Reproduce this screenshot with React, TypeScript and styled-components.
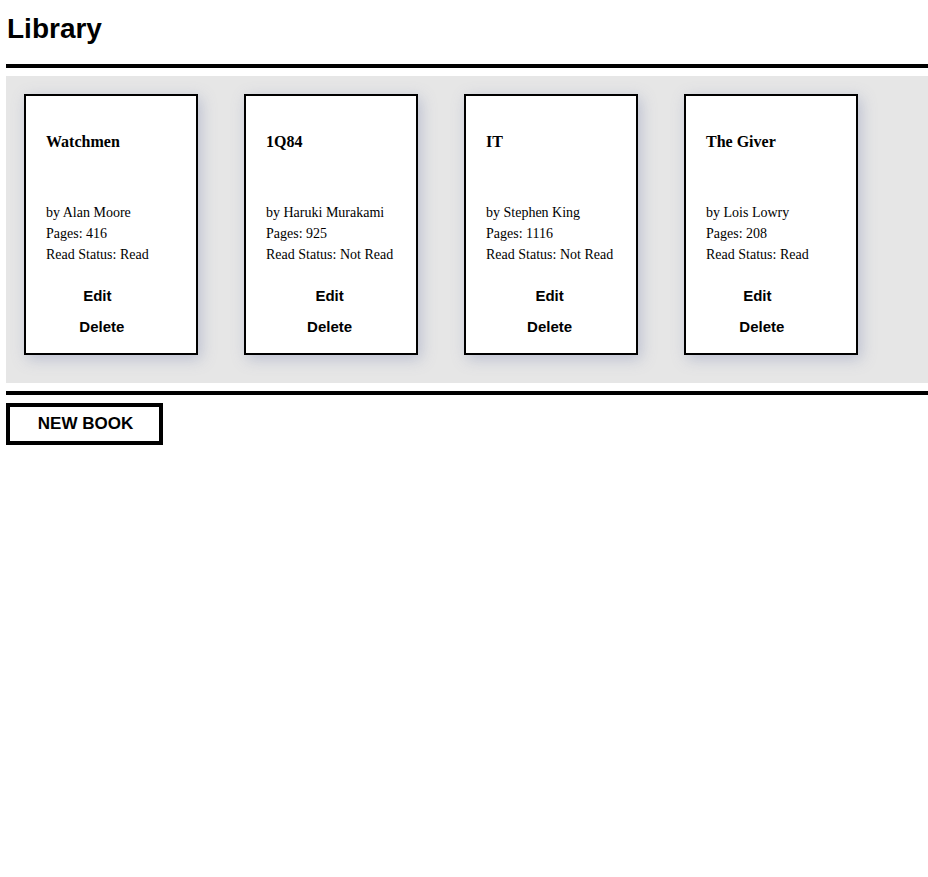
import React from "react";
import styled, { createGlobalStyle } from "styled-components";

type Book = {
  title: string;
  author: string;
  pages: number;
  read: boolean;
};

const books: Book[] = [
  { title: "Watchmen", author: "Alan Moore", pages: 416, read: true },
  { title: "1Q84", author: "Haruki Murakami", pages: 925, read: false },
  { title: "IT", author: "Stephen King", pages: 1116, read: false },
  { title: "The Giver", author: "Lois Lowry", pages: 208, read: true },
];

function App() {
  return (
    <>
      <GlobalStyle />
      <Page>
        <Title>Library</Title>
        <Rule />
        <Shelf>
          {books.map((book) => (
            <Card key={book.title}>
              <Content>
                <BookTitle>{book.title}</BookTitle>
                <Info>by {book.author}</Info>
                <Info>Pages: {book.pages}</Info>
                <Info>Read Status: {book.read ? "Read" : "Not Read"}</Info>
                <Actions>
                  <ActionBtn>Edit</ActionBtn>
                  <ActionBtn $shift={book.read ? 9 : 0}>Delete</ActionBtn>
                </Actions>
              </Content>
            </Card>
          ))}
        </Shelf>
        <Rule $gap={8} />
        <NewBookBtn>NEW BOOK</NewBookBtn>
      </Page>
    </>
  );
}

const GlobalStyle = createGlobalStyle`
  body {
    margin: 0;
    background: #fff;
    font-family: "Liberation Sans", Arial, sans-serif;
  }
`;

const Page = styled.div`
  padding: 0 0 0 6px;
  display: flex;
  flex-direction: column;
  align-items: flex-start;
`;

const Title = styled.h1`
  margin: 12px 0 0 1px;
  font-size: 28px;
  line-height: 34px;
  font-weight: bold;
  color: #000;
`;

const Rule = styled.div<{ $gap?: number }>`
  align-self: stretch;
  height: 4px;
  background: #000;
  margin: ${(p) => (p.$gap ? `${p.$gap}px 0 0` : "18px 0 8px")};
`;

const Shelf = styled.div`
  align-self: stretch;
  background: #e6e6e6;
  display: flex;
  gap: 46px;
  padding: 18px 18px 28px;
`;

const Card = styled.div`
  box-sizing: border-box;
  width: 174px;
  height: 261px;
  background: #fff;
  border: 2px solid #000;
  box-shadow: 3px 4px 14px rgba(110, 120, 170, 0.35);
  padding: 36px 20px 0;
`;

const Content = styled.div`
  display: inline-flex;
  flex-direction: column;
`;

const BookTitle = styled.div`
  font-family: "Liberation Serif", "Times New Roman", serif;
  font-weight: bold;
  font-size: 16px;
  line-height: 20px;
  margin-bottom: 50px;
`;

const Info = styled.div`
  font-family: "Liberation Serif", "Times New Roman", serif;
  font-size: 14px;
  line-height: 21px;
  white-space: nowrap;
`;

const Actions = styled.div`
  display: flex;
  flex-direction: column;
  align-items: center;
  margin-top: 15px;
`;

const ActionBtn = styled.button<{ $shift?: number }>`
  background: none;
  border: none;
  padding: 0;
  height: 31px;
  margin-left: ${(p) => p.$shift ?? 0}px;
  font-family: "Liberation Sans", Arial, sans-serif;
  font-weight: bold;
  font-size: 15px;
  color: #000;
  cursor: pointer;
`;

const NewBookBtn = styled.button`
  margin-top: 8px;
  box-sizing: border-box;
  width: 157px;
  height: 42px;
  padding: 0 0 0 2px;
  background: #fff;
  border: 4px solid #000;
  font-family: "Liberation Sans", Arial, sans-serif;
  font-weight: bold;
  font-size: 17px;
  color: #000;
  cursor: pointer;
`;

export default App;
